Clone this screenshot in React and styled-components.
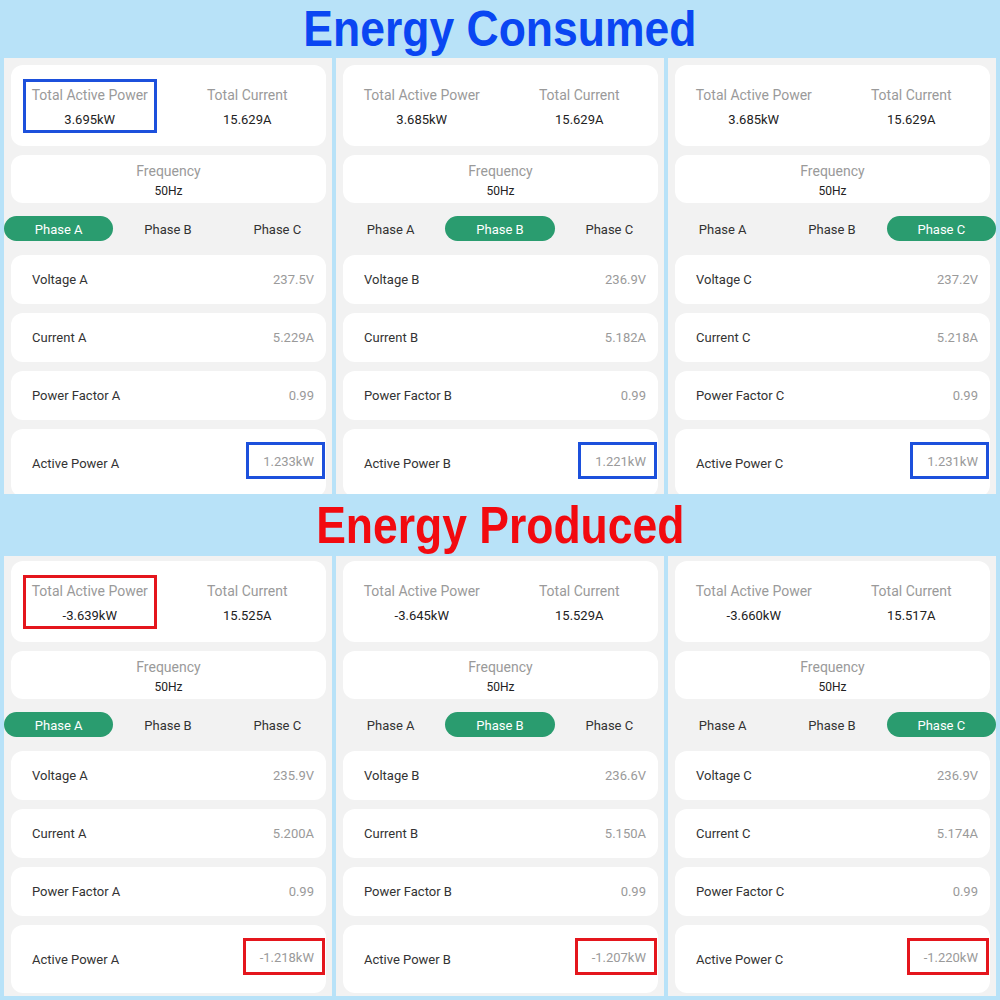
import React from "react";
import styled, { createGlobalStyle } from "styled-components";

const Global = createGlobalStyle`
  html, body { margin: 0; padding: 0; background: #b8e2f8; }
  body { font-family: Roboto, "Noto Sans", "Liberation Sans", sans-serif; }
  * { box-sizing: border-box; }
`;

const Page = styled.div`
  width: 1000px;
  height: 1000px;
  background: #b8e2f8;
  display: flex;
  flex-direction: column;
  overflow: hidden;
`;

const TitleBand = styled.div`
  height: ${(p) => p.$h}px;
  flex-shrink: 0;
  display: flex;
  align-items: center;
  justify-content: center;
`;

const TitleText = styled.h1`
  margin: 0;
  font-family: "Liberation Sans", Arial, sans-serif;
  font-weight: 700;
  font-size: ${(p) => p.$size}px;
  line-height: 1;
  color: ${(p) => p.$color};
  transform: scaleX(${(p) => p.$sx});
  white-space: nowrap;
`;

const PanelRow = styled.div`
  flex-shrink: 0;
  display: grid;
  grid-template-columns: repeat(3, 1fr);
  gap: 4px;
  padding: 0 4px;
`;

const Panel = styled.div`
  height: ${(p) => p.$h}px;
  background: #f2f2f2;
  overflow: hidden;
  display: flex;
  flex-direction: column;
  padding-top: ${(p) => p.$pt}px;
  & > * { flex-shrink: 0; }
`;

const Card = styled.div`
  background: #ffffff;
  border-radius: 12px;
  margin: 0 6px 0 7px;
  flex-shrink: 0;
`;

const SummaryCard = styled(Card)`
  height: 81px;
  display: grid;
  grid-template-columns: 1fr 1fr;
  align-items: center;
  justify-items: center;
`;

const Stat = styled.div`
  display: flex;
  flex-direction: column;
  align-items: center;
  gap: 9px;
  padding: 5px 6px 2px;
  border: 3px solid ${(p) => p.$mark || "transparent"};
`;

const StatLabel = styled.div`
  font-size: 14px;
  line-height: 16px;
  color: #9a9a9a;
  white-space: nowrap;
`;

const StatValue = styled.div`
  font-size: 13px;
  line-height: 16px;
  color: #222;
  white-space: nowrap;
`;

const FreqCard = styled(Card)`
  height: 48px;
  margin-top: 9px;
  padding-top: 3px;
  display: flex;
  flex-direction: column;
  align-items: center;
  justify-content: center;
  gap: 5px;
`;

const FreqLabel = styled.div`
  font-size: 14px;
  line-height: 16px;
  color: #9a9a9a;
`;

const FreqValue = styled.div`
  font-size: 12px;
  line-height: 14px;
  color: #222;
`;

const Tabs = styled.div`
  margin-top: 13px;
  display: grid;
  grid-template-columns: repeat(3, 1fr);
  height: 25px;
`;

const Tab = styled.div`
  display: flex;
  align-items: center;
  justify-content: center;
  border-radius: 13px;
  font-size: 13px;
  padding-top: 1px;
  background: ${(p) => (p.$active ? "#2a9c6f" : "transparent")};
  color: ${(p) => (p.$active ? "#ffffff" : "#333")};
`;

const Rows = styled.div`
  margin-top: 14px;
  display: flex;
  flex-direction: column;
  gap: 9px;
`;

const RowCard = styled(Card)`
  height: ${(p) => (p.$tall ? 68 : 49)}px;
  display: flex;
  align-items: center;
  justify-content: space-between;
  padding: 0 12px 0 21px;
`;

const RowLabel = styled.div`
  font-size: 13px;
  color: #333;
`;

const RowValue = styled.div`
  font-size: 13px;
  color: #9a9a9a;
  line-height: 29px;
  ${(p) =>
    p.$mark
      ? `border: 3px solid ${p.$mark}; padding: 2px 8px 0 14px; margin: -5px -11px 0 0;`
      : ""}
`;

const PHASES = ["A", "B", "C"];

function PhasePanel({ data, phase, mark, h, pt }) {
  return (
    <Panel $h={h} $pt={pt}>
      <SummaryCard>
        <Stat $mark={mark ? mark : undefined}>
          <StatLabel>Total Active Power</StatLabel>
          <StatValue>{data.power}</StatValue>
        </Stat>
        <Stat>
          <StatLabel>Total Current</StatLabel>
          <StatValue>{data.current}</StatValue>
        </Stat>
      </SummaryCard>
      <FreqCard>
        <FreqLabel>Frequency</FreqLabel>
        <FreqValue>50Hz</FreqValue>
      </FreqCard>
      <Tabs>
        {PHASES.map((p) => (
          <Tab key={p} $active={p === phase}>
            Phase {p}
          </Tab>
        ))}
      </Tabs>
      <Rows>
        <RowCard>
          <RowLabel>Voltage {phase}</RowLabel>
          <RowValue>{data.v}</RowValue>
        </RowCard>
        <RowCard>
          <RowLabel>Current {phase}</RowLabel>
          <RowValue>{data.a}</RowValue>
        </RowCard>
        <RowCard>
          <RowLabel>Power Factor {phase}</RowLabel>
          <RowValue>0.99</RowValue>
        </RowCard>
        <RowCard $tall>
          <RowLabel>Active Power {phase}</RowLabel>
          <RowValue $mark={data.markColor}>{data.p}</RowValue>
        </RowCard>
      </Rows>
    </Panel>
  );
}

const BLUE = "#1c50dc";
const RED = "#e4161d";

const consumed = [
  { power: "3.695kW", current: "15.629A", v: "237.5V", a: "5.229A", p: "1.233kW", markColor: BLUE },
  { power: "3.685kW", current: "15.629A", v: "236.9V", a: "5.182A", p: "1.221kW", markColor: BLUE },
  { power: "3.685kW", current: "15.629A", v: "237.2V", a: "5.218A", p: "1.231kW", markColor: BLUE },
];

const produced = [
  { power: "-3.639kW", current: "15.525A", v: "235.9V", a: "5.200A", p: "-1.218kW", markColor: RED },
  { power: "-3.645kW", current: "15.529A", v: "236.6V", a: "5.150A", p: "-1.207kW", markColor: RED },
  { power: "-3.660kW", current: "15.517A", v: "236.9V", a: "5.174A", p: "-1.220kW", markColor: RED },
];

export default function App() {
  return (
    <Page>
      <Global />
      <TitleBand $h={58}>
        <TitleText $size={50} $sx={0.89} $color="#0a46f2">
          Energy Consumed
        </TitleText>
      </TitleBand>
      <PanelRow>
        {consumed.map((d, i) => (
          <PhasePanel
            key={i}
            data={d}
            phase={PHASES[i]}
            mark={i === 0 ? BLUE : null}
            h={436}
            pt={7}
          />
        ))}
      </PanelRow>
      <TitleBand $h={62}>
        <TitleText $size={52} $sx={0.855} $color="#f20a0f">
          Energy Produced
        </TitleText>
      </TitleBand>
      <PanelRow>
        {produced.map((d, i) => (
          <PhasePanel
            key={i}
            data={d}
            phase={PHASES[i]}
            mark={i === 0 ? RED : null}
            h={440}
            pt={5}
          />
        ))}
      </PanelRow>
    </Page>
  );
}
